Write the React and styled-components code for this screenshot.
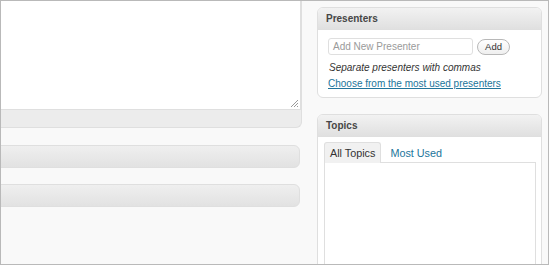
import React from "react";
import styled, { createGlobalStyle } from "styled-components";

const GlobalStyle = createGlobalStyle`
  html, body {
    margin: 0;
    padding: 0;
    background: #ffffff;
  }
  body {
    font-family: "Liberation Sans", Arial, sans-serif;
  }
`;

const Frame = styled.div`
  box-sizing: border-box;
  width: 549px;
  height: 265px;
  border: 1px solid #b9b9b9;
  background: #f9f9f9;
  overflow: hidden;
  display: flex;
  align-items: flex-start;
`;

const MainColumn = styled.div`
  width: 307px;
  margin-left: -6px;
  flex-shrink: 0;
  display: flex;
  flex-direction: column;
`;

const EditorWrap = styled.div`
  border: 1px solid #dfdfdf;
  border-top: none;
  border-radius: 0 0 6px 6px;
  background: #ececec;
`;

const TextArea = styled.div`
  position: relative;
  height: 108px;
  background: #ffffff;
  border-right: 1px solid #dfdfdf;
  border-bottom: 1px solid #dfdfdf;
`;

const Grip = styled.svg`
  position: absolute;
  right: 1px;
  bottom: 1px;
`;

const StatusBar = styled.div`
  height: 17px;
`;

const Bar = styled.div`
  height: 21px;
  margin-top: ${(p) => p.$gap}px;
  margin-right: 2px;
  border: 1px solid #dfdfdf;
  border-radius: 6px;
  background: linear-gradient(to bottom, #efefef, #e2e2e2);
`;

const SideColumn = styled.div`
  width: 225px;
  margin-left: 15px;
  padding-top: 6px;
  display: flex;
  flex-direction: column;
  gap: 16px;
`;

const Box = styled.div`
  border: 1px solid #dfdfdf;
  border-radius: 6px;
  background: #ffffff;
  overflow: hidden;
`;

const BoxHeader = styled.h3`
  margin: 0;
  height: 21px;
  padding: 0 8px;
  display: flex;
  align-items: center;
  font-size: 10px;
  font-weight: bold;
  color: #464646;
  background: linear-gradient(to bottom, #f2f2f2, #e0e0e0);
  border-bottom: 1px solid #dfdfdf;
`;

const PresenterBody = styled.div`
  padding: 8px 10px 8px 10px;
  height: 51px;
`;

const AddRow = styled.div`
  display: flex;
  align-items: center;
  gap: 4px;
`;

const Input = styled.div`
  box-sizing: border-box;
  width: 145px;
  height: 17px;
  padding: 0 4px;
  border: 1px solid #dfdfdf;
  border-radius: 3px;
  background: #ffffff;
  font-size: 10px;
  line-height: 15px;
  color: #9a9a9a;
`;

const AddButton = styled.div`
  box-sizing: border-box;
  width: 33px;
  height: 16px;
  border: 1px solid #b8b8b8;
  border-radius: 9px;
  background: linear-gradient(to bottom, #ffffff, #efefef);
  font-size: 9.5px;
  line-height: 14px;
  text-align: center;
  color: #333333;
`;

const Hint = styled.p`
  margin: 6px 0 0 1px;
  font-size: 10px;
  font-style: italic;
  color: #333333;
  line-height: 13px;
`;

const Link = styled.a`
  display: block;
  margin-top: 3px;
  font-size: 10px;
  line-height: 13px;
  color: #21759b;
  text-decoration: underline;
`;

const TopicsBody = styled.div`
  padding: 5px 5px 0 6px;
  height: 140px;
`;

const Tabs = styled.div`
  display: flex;
  align-items: flex-end;
  gap: 3px;
`;

const Tab = styled.div`
  box-sizing: border-box;
  height: 21px;
  padding: 0 5px;
  font-size: 10.8px;
  line-height: 20px;
  color: ${(p) => (p.$active ? "#333333" : "#21759b")};
  background: ${(p) => (p.$active ? "#f1f1f1" : "transparent")};
  border: 1px solid ${(p) => (p.$active ? "#dfdfdf" : "transparent")};
  border-bottom: none;
  border-radius: 3px 3px 0 0;
  margin-bottom: -1px;
  position: relative;
`;

const TabPanel = styled.div`
  height: 120px;
  border: 1px solid #dfdfdf;
  background: #ffffff;
`;

export default function App() {
  return (
    <>
      <GlobalStyle />
      <Frame>
        <MainColumn>
          <EditorWrap>
            <TextArea>
              <Grip width="9" height="9" viewBox="0 0 9 9">
                <path d="M8 1 L1 8 M8 4 L4 8 M8 7 L7 8" stroke="#9a9a9a" strokeWidth="1" fill="none" />
              </Grip>
            </TextArea>
            <StatusBar />
          </EditorWrap>
          <Bar $gap={17} />
          <Bar $gap={16} />
        </MainColumn>
        <SideColumn>
          <Box>
            <BoxHeader>Presenters</BoxHeader>
            <PresenterBody>
              <AddRow>
                <Input>Add New Presenter</Input>
                <AddButton>Add</AddButton>
              </AddRow>
              <Hint>Separate presenters with commas</Hint>
              <Link href="#presenters">Choose from the most used presenters</Link>
            </PresenterBody>
          </Box>
          <Box>
            <BoxHeader>Topics</BoxHeader>
            <TopicsBody>
              <Tabs>
                <Tab $active>All Topics</Tab>
                <Tab>Most Used</Tab>
              </Tabs>
              <TabPanel />
            </TopicsBody>
          </Box>
        </SideColumn>
      </Frame>
    </>
  );
}
